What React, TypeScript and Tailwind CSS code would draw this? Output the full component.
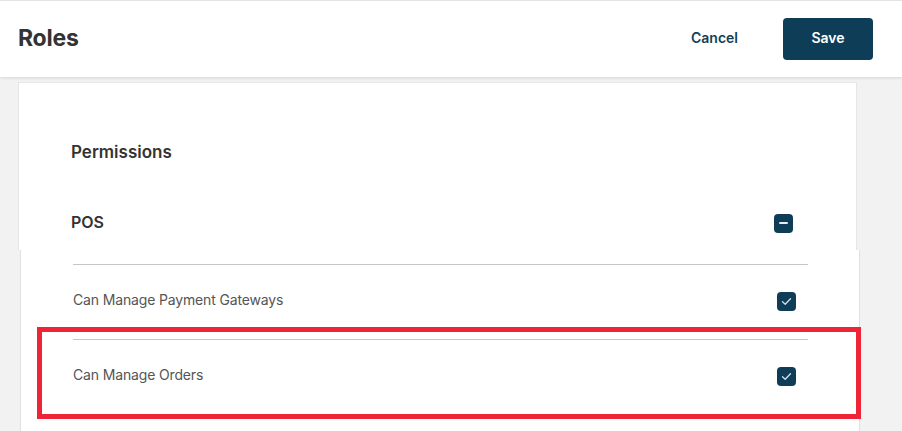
import React from "react";

function CheckBox() {
  return (
    <div className="flex h-[19px] w-[19px] items-center justify-center rounded-[4px] bg-[#0f3d57]">
      <svg width="13" height="13" viewBox="0 0 13 13" fill="none">
        <path d="M2.5 6.8 L5.2 9.3 L10.5 3.8" stroke="#cfe3ee" strokeWidth="1.3" strokeLinecap="round" strokeLinejoin="round" />
      </svg>
    </div>
  );
}

function MinusBox() {
  return (
    <div className="flex h-[19px] w-[19px] items-center justify-center rounded-[4px] bg-[#0f3d57]">
      <div className="h-[2px] w-[9px] rounded-full bg-[#e8eef2]" />
    </div>
  );
}

function Row({ label }: { label: string }) {
  return (
    <div>
      <div className="h-px bg-[#c6c6c6]" />
      <div className="flex h-[74px] items-center justify-between pb-[5px]">
        <span className="text-[14px] tracking-[-0.15px] text-[#555555]">{label}</span>
        <div className="mr-[12px] mt-[3px]">
          <CheckBox />
        </div>
      </div>
    </div>
  );
}

export default function App() {
  return (
    <div
      className="relative h-[431px] w-[902px] overflow-hidden bg-[#f2f2f2]"
      style={{ fontFamily: "Inter, 'Liberation Sans', sans-serif" }}
    >
      <header className="relative z-10 flex h-[77px] items-center justify-between border-t border-[#e4e4e4] bg-white pb-[1px] pl-[18px] pr-[29px] shadow-[0_1px_3px_rgba(0,0,0,0.12)]">
        <h1 className="mb-[1px] text-[23px] font-bold tracking-[-0.2px] text-[#333333]">Roles</h1>
        <div className="flex items-center">
          <button className="mb-[2px] mr-[45px] text-[14px] font-semibold text-[#123f57]">Cancel</button>
          <button className="h-[42px] w-[90px] rounded-[4px] bg-[#0e3e57] pb-[2px] text-[14px] font-semibold text-white">
            Save
          </button>
        </div>
      </header>

      <div className="pl-[18px] pt-[5px]">
        <div className="h-[168px] w-[839px] border-x border-t border-[#e6e6e6] bg-white pl-[52px] pr-[63px] pt-[57px]">
          <div className="h-[24px] text-[17px] font-semibold leading-[24px] text-[#333333]">Permissions</div>
          <div className="mt-[47px] flex h-[24px] items-center justify-between">
            <span className="mb-[2px] text-[16px] font-semibold text-[#333333]">POS</span>
            <MinusBox />
          </div>
        </div>
        <div className="ml-[2px] h-[200px] w-[840px] border-x border-[#e0e0e0] bg-white pl-[52px] pr-[51px] pt-[14px]">
          <Row label="Can Manage Payment Gateways" />
          <Row label="Can Manage Orders" />
          <div className="h-px bg-[#c6c6c6]" />
        </div>
      </div>

      <div className="pointer-events-none absolute left-[37px] top-[327px] h-[92px] w-[824px] border-[5px] border-[#ee2536]" />
    </div>
  );
}
